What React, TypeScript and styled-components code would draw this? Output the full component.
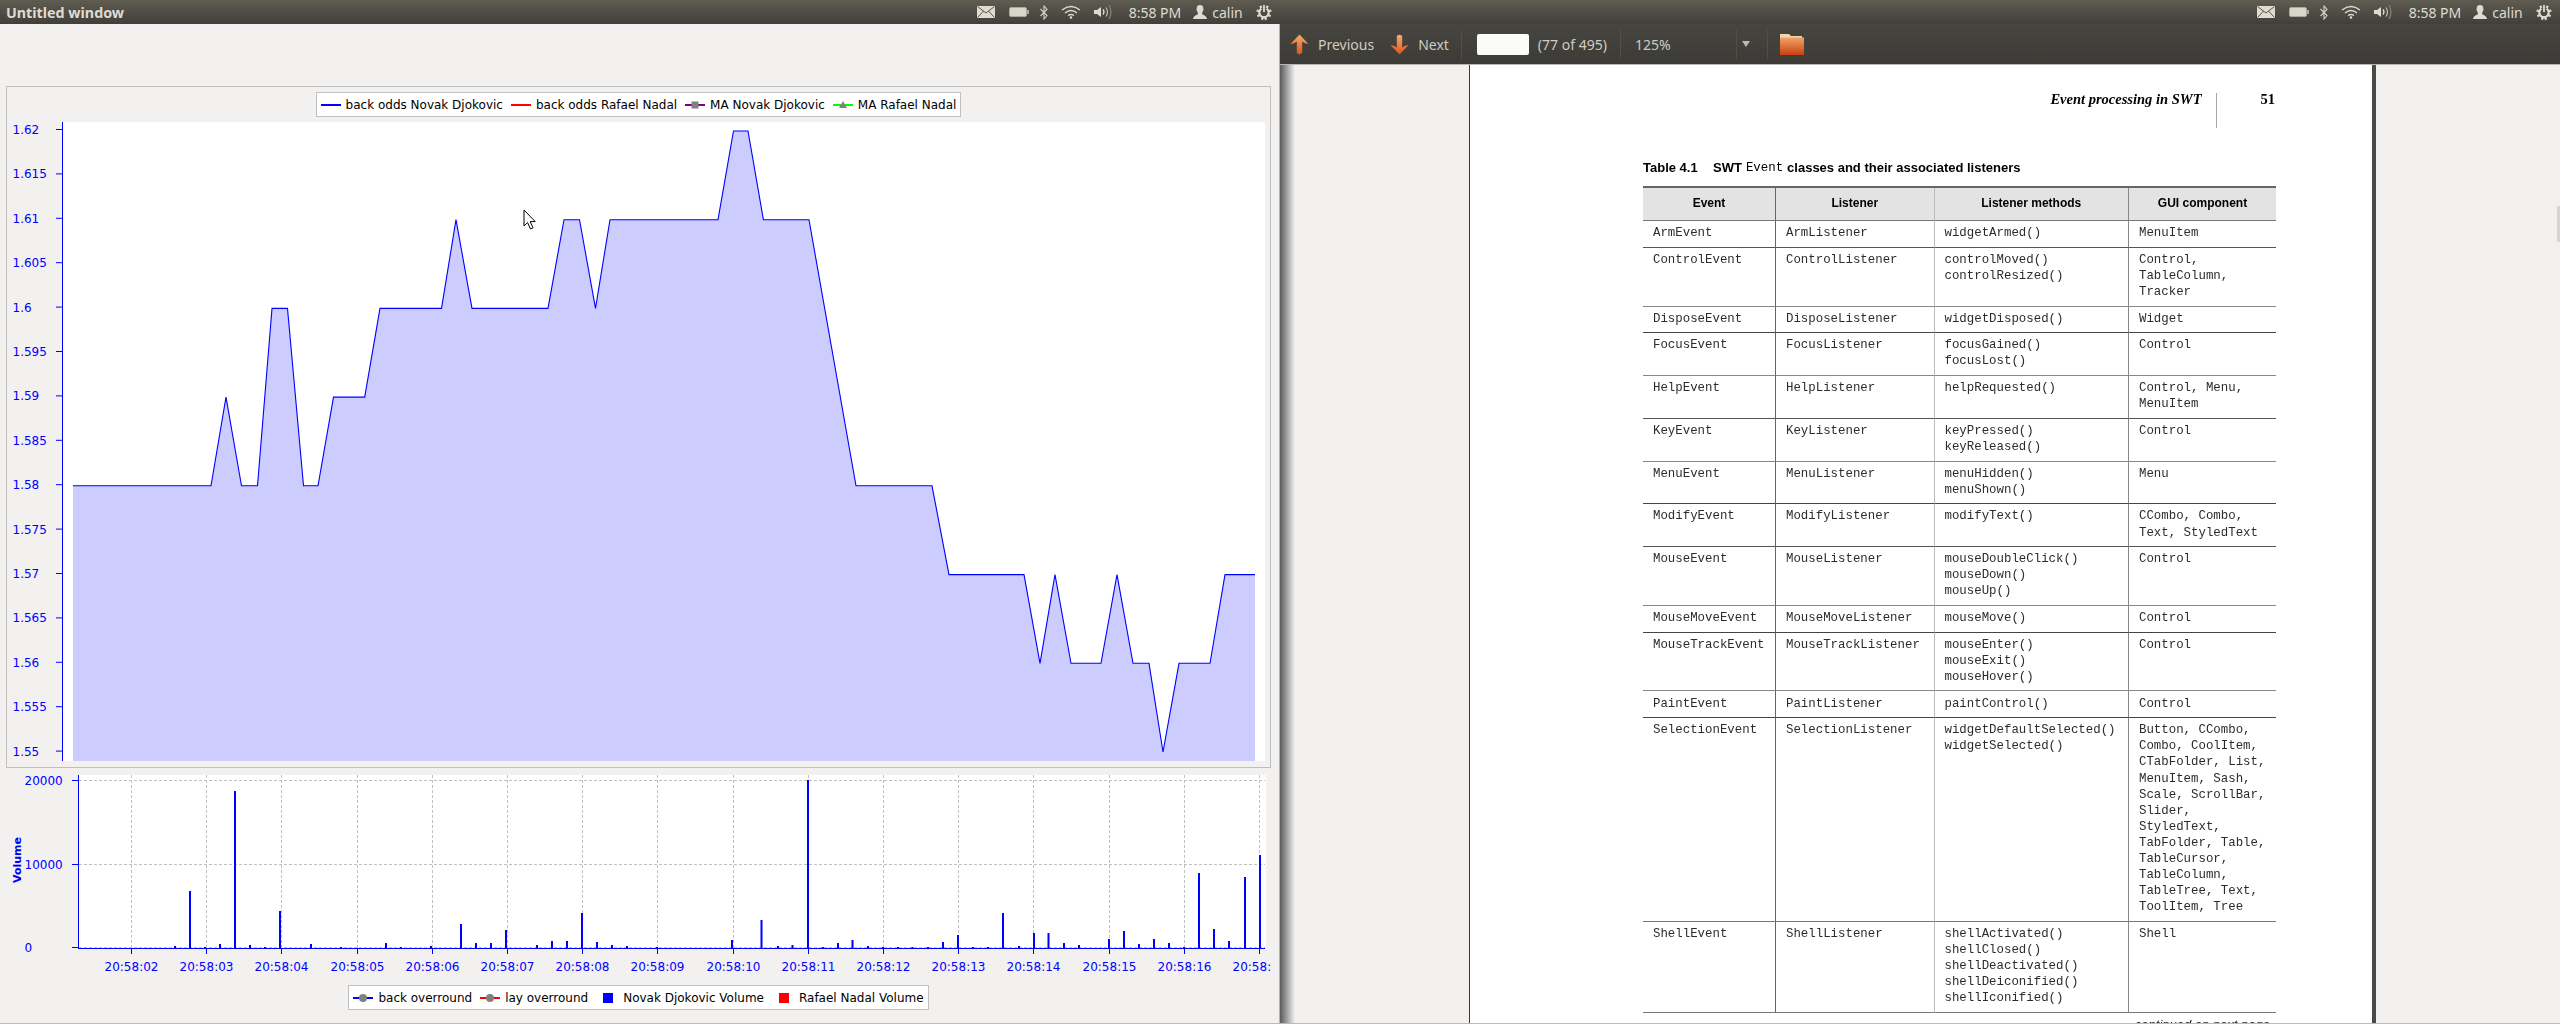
import React from "react";
import styled, { createGlobalStyle } from "styled-components";

const GlobalStyle = createGlobalStyle`
  html, body {
    margin: 0;
    padding: 0;
    background: #f2f1f0;
    overflow: hidden;
  }
`;

const Screen = styled.div`
  position: relative;
  display: flex;
  width: 2560px;
  height: 1024px;
  overflow: hidden;
`;

const Window = styled.div`
  display: flex;
  flex-direction: column;
  width: 1280px;
  height: 1024px;
`;

const TopPanel = styled.div`
  display: flex;
  align-items: center;
  flex: 0 0 24px;
  height: 24px;
  padding: 0 8px 0 6px;
  box-sizing: border-box;
  background: linear-gradient(#5f5c50, #403f3a);
  font-family: "Noto Sans", sans-serif;
  font-size: 14px;
  color: #dfdbd2;
`;

const WindowTitle = styled.span`
  font-weight: 700;
  font-size: 14.3px;
  white-space: nowrap;
`;

const Tray = styled.div`
  display: flex;
  align-items: center;
  margin-left: auto;
`;

const TraySlot = styled.div<{ $left: number; $width?: number }>`
  display: flex;
  align-items: center;
  justify-content: center;
  margin-left: ${(p) => p.$left}px;
  ${(p) => (p.$width ? `width: ${p.$width}px;` : "")}
  white-space: nowrap;
`;

/* left window: the two JFreeChart panels */
const ChartBody = styled.div`
  display: flex;
  flex-direction: column;
  flex: 1;
  padding: 62px 8px 0 6px;
  box-sizing: border-box;
  background: #f2f1f0;
  border-bottom: 1px solid #bbbbb8;
  border-right: 1px solid #b5b3ae;
`;

const PricePanel = styled.div`
  display: flex;
  flex-direction: column;
  align-items: center;
  width: 1265px;
  height: 682px;
  box-sizing: border-box;
  border: 1px solid #c0c0c0;
  padding-top: 5px;
`;

const Legend = styled.div`
  display: flex;
  align-items: center;
  gap: 8px;
  height: 25px;
  padding: 0 4px;
  box-sizing: border-box;
  background: #fff;
  border: 1px solid #c0c0c0;
  font-family: "DejaVu Sans", sans-serif;
  font-size: 12px;
  color: #000;
  white-space: nowrap;
`;

const LegendItem = styled.div`
  display: flex;
  align-items: center;
  gap: 5px;
`;

const SquareKey = styled.div<{ $color: string }>`
  width: 10px;
  height: 10px;
  margin: 0 5px 0 7px;
  background: ${(p) => p.$color};
`;

const PlotSvg = styled.svg`
  display: block;
  flex: none;
  margin-top: 5px;
`;

const VolumeSvg = styled.svg`
  display: block;
  flex: none;
  margin-left: -6px;
`;

const BottomLegend = styled.div`
  display: flex;
  justify-content: center;
  width: 1265px;
  margin-top: 10px;
`;

const AxisText = styled.text`
  font-family: "DejaVu Sans", sans-serif;
  font-size: 12px;
  fill: #0000ff;
`;

const AxisTitle = styled.text`
  font-family: "DejaVu Sans", sans-serif;
  font-size: 11px;
  font-weight: 700;
  fill: #0000ff;
`;

/* right window: the PDF viewer */
const ViewerToolbar = styled.div`
  display: flex;
  align-items: center;
  flex: 0 0 41px;
  height: 41px;
  box-sizing: border-box;
  padding-left: 10px;
  background: linear-gradient(#46453f, #3c3b37);
  border-bottom: 1px solid #b9b7b0;
  font-family: "Noto Sans", sans-serif;
  font-size: 14px;
  color: #cfcbc0;
`;

const ToolLabel = styled.span<{ $left: number }>`
  margin-left: ${(p) => p.$left}px;
  white-space: nowrap;
`;

const ToolIcon = styled.svg<{ $left: number }>`
  display: block;
  flex: none;
  margin-left: ${(p) => p.$left}px;
`;

const ToolSep = styled.div<{ $left: number }>`
  flex: none;
  width: 1px;
  height: 29px;
  margin-left: ${(p) => p.$left}px;
  background: #504f49;
`;

const PageInput = styled.div`
  flex: none;
  width: 52px;
  height: 21px;
  margin-left: 15px;
  border-radius: 2px;
  background: #fbfbfa;
`;

const ZoomArrow = styled.div`
  flex: none;
  margin-left: 5px;
  width: 0;
  height: 0;
  border-left: 4.5px solid transparent;
  border-right: 4.5px solid transparent;
  border-top: 6px solid #bdb9ac;
`;

const ViewerBody = styled.div`
  position: relative;
  display: flex;
  flex: 1;
  min-height: 0;
  background: #f2f1f0;
  border-bottom: 1px solid #bbbbb8;
  overflow: hidden;
`;

const WindowShadow = styled.div`
  position: absolute;
  left: 0;
  top: 0;
  bottom: 0;
  width: 15px;
  background: linear-gradient(to right, rgba(40, 40, 40, 0.75), rgba(60, 60, 60, 0));
`;

const ScrollThumb = styled.div`
  position: absolute;
  right: 0;
  top: 141px;
  width: 3px;
  height: 36px;
  background: #d5d4d1;
`;

const PageSheet = styled.div`
  flex: none;
  width: 907px;
  margin-left: 189px;
  box-sizing: border-box;
  padding: 28px 96px 0 173px;
  background: #fff;
  border-left: 1px solid #3a3a3a;
  border-right: 4px solid #4a4a4a;
  overflow: hidden;
`;

const PageContent = styled.div`
  filter: blur(0.35px);
`;

const RunningHead = styled.div`
  display: flex;
  justify-content: flex-end;
  height: 35px;
  font-family: "Liberation Serif", serif;
  font-size: 14.5px;
  line-height: 16px;
  color: #000;
`;

const HeadTitle = styled.span`
  margin-top: -2px;
  font-style: italic;
  font-weight: 700;
`;

const HeadRule = styled.div`
  width: 1px;
  margin: 0 44px 0 14px;
  background: #a8a8a8;
`;

const HeadNumber = styled.span`
  margin-top: -2px;
  margin-right: 1px;
  font-weight: 700;
`;

const Caption = styled.div`
  display: flex;
  margin-top: 32px;
  font-family: "Liberation Sans", sans-serif;
  font-size: 13px;
  font-weight: 700;
  line-height: 16px;
  color: #000;
  white-space: nowrap;
`;

const CaptionNumber = styled.span`
  width: 70px;
`;

const CaptionCode = styled.code`
  font-family: "Liberation Mono", monospace;
  font-size: 12.4px;
  font-weight: 400;
  margin: 0 4px 0 4px;
`;

const EventTable = styled.table`
  width: 633px;
  margin-top: 10px;
  border-spacing: 0;
  border-collapse: separate;
  table-layout: fixed;
  border-top: 2px solid #666;
`;

const HeadCell = styled.th<{ $rule: string }>`
  height: 33px;
  padding: 0 0 3px;
  box-sizing: border-box;
  background: #e3e3e3;
  border-bottom: 1px solid #777;
  border-left: 1px solid ${(p) => p.$rule};
  font-family: "Liberation Sans", sans-serif;
  font-size: 12px;
  font-weight: 700;
  color: #000;
  &:first-child {
    border-left: 0;
  }
`;

const BodyCell = styled.td<{ $rule: string; $line: string }>`
  padding: 4.2px 0 5.4px 10px;
  box-sizing: border-box;
  vertical-align: top;
  border-bottom: 1px solid ${(p) => p.$line};
  border-left: 1px solid ${(p) => p.$rule};
  font-family: "Liberation Mono", monospace;
  font-size: 12.4px;
  line-height: 16.1px;
  color: #2c2c2c;
  white-space: nowrap;
  &:first-child {
    border-left: 0;
  }
`;

const CellLine = styled.div``;

const Continued = styled.div`
  margin-top: 5px;
  padding-right: 6px;
  font-family: "Liberation Sans", sans-serif;
  font-style: italic;
  font-size: 13px;
  line-height: 14px;
  text-align: right;
  color: #222;
`;

const Pointer = styled.svg`
  position: absolute;
  left: 523px;
  top: 209px;
`;

const columnRules = ["#666", "#666", "#bbb", "#888"];

const tableColumns = [
  { title: "Event", width: 132 },
  { title: "Listener", width: 158.5 },
  { title: "Listener methods", width: 194.5 },
  { title: "GUI component", width: 148 },
];

const tableRows: { cells: string[][]; line: string }[] = [
  { cells: [["ArmEvent"], ["ArmListener"], ["widgetArmed()"], ["MenuItem"]], line: "#555" },
  {
    cells: [["ControlEvent"], ["ControlListener"], ["controlMoved()", "controlResized()"], ["Control,", "TableColumn,", "Tracker"]],
    line: "#888",
  },
  { cells: [["DisposeEvent"], ["DisposeListener"], ["widgetDisposed()"], ["Widget"]], line: "#444" },
  { cells: [["FocusEvent"], ["FocusListener"], ["focusGained()", "focusLost()"], ["Control"]], line: "#888" },
  { cells: [["HelpEvent"], ["HelpListener"], ["helpRequested()"], ["Control, Menu,", "MenuItem"]], line: "#555" },
  { cells: [["KeyEvent"], ["KeyListener"], ["keyPressed()", "keyReleased()"], ["Control"]], line: "#888" },
  { cells: [["MenuEvent"], ["MenuListener"], ["menuHidden()", "menuShown()"], ["Menu"]], line: "#444" },
  { cells: [["ModifyEvent"], ["ModifyListener"], ["modifyText()"], ["CCombo, Combo,", "Text, StyledText"]], line: "#555" },
  { cells: [["MouseEvent"], ["MouseListener"], ["mouseDoubleClick()", "mouseDown()", "mouseUp()"], ["Control"]], line: "#888" },
  { cells: [["MouseMoveEvent"], ["MouseMoveListener"], ["mouseMove()"], ["Control"]], line: "#444" },
  {
    cells: [["MouseTrackEvent"], ["MouseTrackListener"], ["mouseEnter()", "mouseExit()", "mouseHover()"], ["Control"]],
    line: "#888",
  },
  { cells: [["PaintEvent"], ["PaintListener"], ["paintControl()"], ["Control"]], line: "#444" },
  {
    cells: [
      ["SelectionEvent"],
      ["SelectionListener"],
      ["widgetDefaultSelected()", "widgetSelected()"],
      [
        "Button, CCombo,",
        "Combo, CoolItem,",
        "CTabFolder, List,",
        "MenuItem, Sash,",
        "Scale, ScrollBar,",
        "Slider,",
        "StyledText,",
        "TabFolder, Table,",
        "TableCursor,",
        "TableColumn,",
        "TableTree, Text,",
        "ToolItem, Tree",
      ],
    ],
    line: "#777",
  },
  {
    cells: [
      ["ShellEvent"],
      ["ShellListener"],
      ["shellActivated()", "shellClosed()", "shellDeactivated()", "shellDeiconified()", "shellIconified()"],
      ["Shell"],
    ],
    line: "#777",
  },
];

const priceY = (v: number) => 131 + (1.62 - v) * 8871;

const pricePoints: [number, number][] = [
  [73, 1.58], [211, 1.58], [226, 1.59], [241.5, 1.58], [257.5, 1.58], [272, 1.6], [287.5, 1.6],
  [303.5, 1.58], [318, 1.58], [333.5, 1.59], [364.7, 1.59], [380, 1.6], [441.5, 1.6], [456, 1.61],
  [472, 1.6], [548, 1.6], [564, 1.61], [579.5, 1.61], [595.5, 1.6], [610, 1.61], [718, 1.61],
  [733.5, 1.62], [748, 1.62], [763.4, 1.61], [809, 1.61], [856, 1.58], [932, 1.58], [949, 1.57],
  [1024, 1.57], [1040, 1.56], [1055, 1.57], [1071, 1.56], [1101, 1.56], [1117, 1.57], [1133, 1.56],
  [1149, 1.56], [1163, 1.55], [1179, 1.56], [1210, 1.56], [1225, 1.57], [1255, 1.57],
];

const priceTicks = [
  "1.62", "1.615", "1.61", "1.605", "1.6", "1.595", "1.59", "1.585",
  "1.58", "1.575", "1.57", "1.565", "1.56", "1.555", "1.55",
];

const volumeBars: [number, number][] = [
  [175, 946], [190, 891], [205, 947], [220, 944], [235, 791], [250, 945], [265, 947], [280, 911],
  [311, 944], [341, 947], [386, 943], [401, 947], [431, 946], [461, 924], [476, 943], [491, 943],
  [506, 930], [537, 945], [552, 941], [567, 941], [582, 913], [597, 942], [612, 945], [627, 946],
  [657, 947], [732, 940], [761.5, 920], [778, 946], [792.5, 945], [808, 780], [823, 947], [838, 943],
  [852.5, 940], [868, 946], [883, 947], [898, 947], [912.5, 947], [928, 947], [943, 942], [958, 935],
  [973, 947], [988, 947], [1003, 913], [1019, 946], [1034, 933], [1048.5, 933], [1064, 943], [1079, 945],
  [1109, 939], [1124, 931], [1139, 944], [1154, 939], [1169, 943], [1184, 947], [1199, 873], [1214, 929],
  [1229, 941], [1245, 877], [1260, 855],
];

const timeLabels = ["02", "03", "04", "05", "06", "07", "08", "09", "10", "11", "12", "13", "14", "15", "16", "17"];

const PricePlot = () => {
  const line = pricePoints.map(([x, v]) => `${x},${priceY(v).toFixed(1)}`).join(" ");
  return (
    <PlotSvg width={1263} height={645} viewBox="7 122 1263 645">
      <rect x={62} y={122} width={1203} height={639} fill="#fff" />
      <polygon points={`73,761 ${line} 1255,761`} fill="#ccccff" />
      <polyline points={line} fill="none" stroke="#0000ff" strokeWidth={1.1} />
      <line x1={62.5} y1={122} x2={62.5} y2={761} stroke="#0000ff" />
      {priceTicks.map((label, i) => {
        const y = 129.5 + i * 44.4;
        return (
          <g key={label}>
            <line x1={56} y1={y} x2={62} y2={y} stroke="#0000ff" />
            <AxisText x={12.5} y={y + 4.5}>{label}</AxisText>
          </g>
        );
      })}
    </PlotSvg>
  );
};

const VolumePlot = () => (
  <VolumeSvg width={1271} height={207} viewBox="0 768 1271 207">
    <rect x={78} y={775} width={1188} height={173} fill="#fff" />
    {[780.5, 864.5, 947.5].map((y) => (
      <line key={y} x1={79} y1={y} x2={1265} y2={y} stroke="#c0c0c0" strokeDasharray="3 2" />
    ))}
    {timeLabels.map((label, i) => {
      const x = Math.round(131 + i * 75.2) + 0.5;
      return (
        <g key={label}>
          <line x1={x} y1={775} x2={x} y2={948} stroke="#c0c0c0" strokeDasharray="3 2" />
          <line x1={x} y1={948} x2={x} y2={954} stroke="#0000ff" />
          <AxisText x={x} y={971} textAnchor="middle">{`20:58:${label}`}</AxisText>
        </g>
      );
    })}
    {volumeBars.map(([x, top]) => (
      <rect key={x} x={x - 1} y={top} width={2} height={948 - top} fill="#0000ff" />
    ))}
    <line x1={78.5} y1={775} x2={78.5} y2={948} stroke="#0000ff" />
    <line x1={78} y1={948.5} x2={1265} y2={948.5} stroke="#0000ff" />
    {[[780.5, "20000"], [864.5, "10000"], [947.5, "0"]].map(([y, label]) => (
      <g key={label as string}>
        <line x1={72} y1={y as number} x2={78} y2={y as number} stroke="#0000ff" />
        <AxisText x={24.5} y={(y as number) + 4.5}>{label}</AxisText>
      </g>
    ))}
    <AxisTitle transform="translate(21 860) rotate(-90)" textAnchor="middle">Volume</AxisTitle>
  </VolumeSvg>
);

const LineKey = ({ color, marker }: { color: string; marker?: "square" | "triangle" | "circle" }) => (
  <svg width={20} height={12} viewBox="0 0 20 12">
    <line x1={0} y1={6} x2={20} y2={6} stroke={color} strokeWidth={2} />
    {marker === "square" && <rect x={6.5} y={2.5} width={7} height={7} fill="#808080" />}
    {marker === "triangle" && <polygon points="10,2 14,9 6,9" fill="#808080" />}
    {marker === "circle" && <circle cx={10} cy={6} r={4} fill="#808080" />}
  </svg>
);

const MailIcon = () => (
  <svg width={18} height={12} viewBox="0 0 18 12">
    <rect x={0} y={0} width={18} height={12} fill="#e0dcd2" />
    <path d="M0.5 0.5 L9 7 L17.5 0.5 M0.5 11.5 L6.5 5 M17.5 11.5 L11.5 5" stroke="#55534c" fill="none" />
  </svg>
);

const BatteryIcon = () => (
  <svg width={20} height={10} viewBox="0 0 20 10">
    <rect x={0.5} y={0.5} width={17} height={9} rx={1.5} fill="#d9d5ca" stroke="#aaa79c" />
    <rect x={18} y={3} width={2} height={4} fill="#aaa79c" />
  </svg>
);

const BluetoothIcon = () => (
  <svg width={8} height={15} viewBox="0 0 8 15">
    <path d="M0.5 4 L7 10.5 L4 14 V1 L7 4.5 L0.5 11" fill="none" stroke="#d6d2c7" strokeWidth={1.1} />
  </svg>
);

const WifiIcon = () => (
  <svg width={20} height={14} viewBox="0 0 20 14">
    <path d="M1 5 Q10 -2 19 5 M4 8 Q10 3 16 8 M7 10.5 Q10 8.5 13 10.5" fill="none" stroke="#dfdbd2" strokeWidth={1.4} />
    <circle cx={10} cy={12.5} r={1.3} fill="#dfdbd2" />
  </svg>
);

const VolumeIcon = () => (
  <svg width={19} height={16} viewBox="0 0 19 16">
    <path d="M0 6 H3 L7 3 V13 L3 10 H0 Z" fill="#dfdbd2" />
    <path d="M9 5.5 Q11 8 9 10.5" fill="none" stroke="#dfdbd2" strokeWidth={1.3} />
    <path d="M12 3.5 Q15 8 12 12.5" fill="none" stroke="#bdb9ae" strokeWidth={1.2} />
    <path d="M15 1 Q19 8 15 15" fill="none" stroke="#86837a" strokeWidth={1.2} />
  </svg>
);

const UserIcon = () => (
  <svg width={14} height={14} viewBox="0 0 14 14">
    <ellipse cx={7} cy={4} rx={3.4} ry={4} fill="#dfdbd2" />
    <path d="M5 7 L4.6 9.4 Q0.5 10.5 0 14 H14 Q13.5 10.5 9.4 9.4 L9 7 Z" fill="#dfdbd2" />
  </svg>
);

const GearIcon = () => {
  const teeth = [30, 75, 120, 165, 195, 240, 285, 330];
  return (
    <svg width={16} height={17} viewBox="-8 -8.5 16 17">
      <path d="M-2.6 -3.9 A4.7 4.7 0 1 0 2.6 -3.9" fill="none" stroke="#dfdbd2" strokeWidth={2.2} />
      <line x1={0} y1={-7.5} x2={0} y2={-0.5} stroke="#dfdbd2" strokeWidth={1.8} />
      {teeth.map((a) => (
        <rect key={a} x={-1.1} y={-7.6} width={2.2} height={2.4} fill="#dfdbd2" transform={`rotate(${a})`} />
      ))}
    </svg>
  );
};

const TrayIcons = () => (
  <Tray>
    <TraySlot $left={0}><MailIcon /></TraySlot>
    <TraySlot $left={14}><BatteryIcon /></TraySlot>
    <TraySlot $left={11}><BluetoothIcon /></TraySlot>
    <TraySlot $left={13}><WifiIcon /></TraySlot>
    <TraySlot $left={13}><VolumeIcon /></TraySlot>
    <TraySlot $left={16} $width={52}>8:58 PM</TraySlot>
    <TraySlot $left={12}><UserIcon /></TraySlot>
    <TraySlot $left={5} $width={31}>calin</TraySlot>
    <TraySlot $left={13}><GearIcon /></TraySlot>
  </Tray>
);

const ArrowIcon = ({ id, left, down }: { id: string; left: number; down?: boolean }) => (
  <ToolIcon $left={left} width={19} height={21} viewBox="0 0 19 21">
    <defs>
      <linearGradient id={id} x1="0" y1="0" x2="0" y2="1">
        <stop offset="0" stopColor={down ? "#d9561f" : "#f6ab6c"} />
        <stop offset="1" stopColor={down ? "#f6ab6c" : "#d9561f"} />
      </linearGradient>
    </defs>
    <path
      d="M9.5 0.5 L18.5 10 Q14.5 9.5 12.2 7.5 V19 Q9.5 21.5 6.8 19 V7.5 Q4.5 9.5 0.5 10 Z"
      fill={`url(#${id})`}
      transform={down ? "rotate(180 9.5 10.5)" : undefined}
    />
  </ToolIcon>
);

const FolderIcon = () => (
  <ToolIcon $left={12} width={24} height={21} viewBox="0 0 24 21">
    <defs>
      <linearGradient id="folderFill" x1="0" y1="0" x2="0" y2="1">
        <stop offset="0" stopColor="#f0a468" />
        <stop offset="1" stopColor="#c9400f" />
      </linearGradient>
    </defs>
    <path d="M0 0 H9 L11 2 H22 V6 H0 Z" fill="#f3d2b0" />
    <rect x={0} y={3.5} width={24} height={17.5} fill="url(#folderFill)" />
  </ToolIcon>
);

const App = () => (
  <Screen>
    <GlobalStyle />
    <Window>
      <TopPanel>
        <WindowTitle>Untitled window</WindowTitle>
        <TrayIcons />
      </TopPanel>
      <ChartBody>
        <PricePanel>
          <Legend>
            <LegendItem><LineKey color="#0000ff" />back odds Novak Djokovic</LegendItem>
            <LegendItem><LineKey color="#ff0000" />back odds Rafael Nadal</LegendItem>
            <LegendItem><LineKey color="#800080" marker="square" />MA Novak Djokovic</LegendItem>
            <LegendItem><LineKey color="#00ff00" marker="triangle" />MA Rafael Nadal</LegendItem>
          </Legend>
          <PricePlot />
        </PricePanel>
        <VolumePlot />
        <BottomLegend>
          <Legend>
            <LegendItem><LineKey color="#0000ff" marker="circle" />back overround</LegendItem>
            <LegendItem><LineKey color="#ff0000" marker="circle" />lay overround</LegendItem>
            <LegendItem><SquareKey $color="#0000ff" />Novak Djokovic Volume</LegendItem>
            <LegendItem><SquareKey $color="#ff0000" />Rafael Nadal Volume</LegendItem>
          </Legend>
        </BottomLegend>
      </ChartBody>
    </Window>
    <Window>
      <TopPanel>
        <TrayIcons />
      </TopPanel>
      <ViewerToolbar>
        <ArrowIcon id="arrowUp" left={0} />
        <ToolLabel $left={9}>Previous</ToolLabel>
        <ArrowIcon id="arrowDown" left={16} down />
        <ToolLabel $left={9}>Next</ToolLabel>
        <ToolSep $left={12} />
        <PageInput />
        <ToolLabel $left={9}>(77 of 495)</ToolLabel>
        <ToolSep $left={13} />
        <ToolLabel $left={14}>125%</ToolLabel>
        <ToolSep $left={65} />
        <ZoomArrow />
        <ToolSep $left={17} />
        <FolderIcon />
      </ViewerToolbar>
      <ViewerBody>
        <PageSheet>
          <PageContent>
            <RunningHead>
              <HeadTitle>Event processing in SWT</HeadTitle>
              <HeadRule />
              <HeadNumber>51</HeadNumber>
            </RunningHead>
            <Caption>
              <CaptionNumber>Table 4.1</CaptionNumber>
              SWT<CaptionCode>Event</CaptionCode>classes and their associated listeners
            </Caption>
            <EventTable>
              <colgroup>
                {tableColumns.map((c) => (
                  <col key={c.title} width={c.width} />
                ))}
              </colgroup>
              <thead>
                <tr>
                  {tableColumns.map((c, i) => (
                    <HeadCell key={c.title} $rule={columnRules[i]}>{c.title}</HeadCell>
                  ))}
                </tr>
              </thead>
              <tbody>
                {tableRows.map((row) => (
                  <tr key={row.cells[0][0]}>
                    {row.cells.map((lines, i) => (
                      <BodyCell key={i} $rule={columnRules[i]} $line={row.line}>
                        {lines.map((text) => (
                          <CellLine key={text}>{text}</CellLine>
                        ))}
                      </BodyCell>
                    ))}
                  </tr>
                ))}
              </tbody>
            </EventTable>
            <Continued>continued on next page</Continued>
          </PageContent>
        </PageSheet>
        <WindowShadow />
        <ScrollThumb />
      </ViewerBody>
    </Window>
    <Pointer width={14} height={21} viewBox="0 0 14 21">
      <path d="M1 1 V17 L4.6 13.6 L7.5 20 L10 18.8 L7.2 12.6 H12.2 Z" fill="#fff" stroke="#000" strokeWidth={1} />
    </Pointer>
  </Screen>
);

export default App;
